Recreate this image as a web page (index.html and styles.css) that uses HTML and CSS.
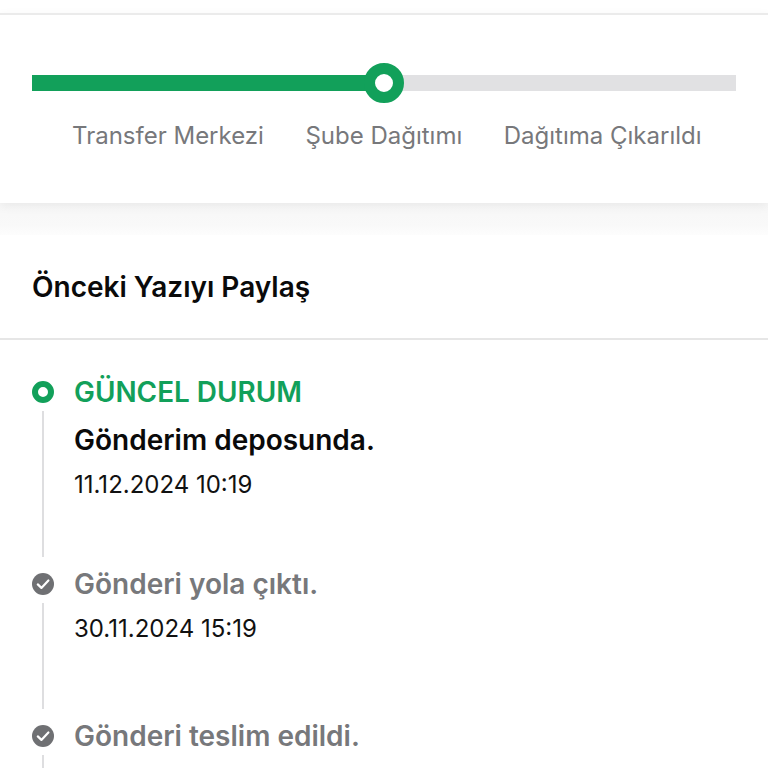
FILE: index.html
```html
<!DOCTYPE html>
<html lang="tr">
<head>
<meta charset="utf-8">
<title>Gönderi Takibi</title>
<link rel="stylesheet" href="styles.css">
</head>
<body>
<div class="page">
  <section class="progress-card">
    <div class="track">
      <div class="track-fill"></div>
      <div class="track-knob"></div>
    </div>
    <div class="steps">
      <span>Transfer Merkezi</span>
      <span>Şube Dağıtımı</span>
      <span>Dağıtıma Çıkarıldı</span>
    </div>
  </section>
  <div class="spacer"></div>
  <section class="history">
    <h2 class="history-title">Önceki Yazıyı Paylaş</h2>
    <ol class="timeline">
      <li class="event event-current">
        <div class="rail"><span class="dot-current"></span><span class="rail-line"></span></div>
        <div class="event-body">
          <div class="current-label">GÜNCEL DURUM</div>
          <div class="event-title">Gönderim deposunda.</div>
          <div class="event-time">11.12.2024 10:19</div>
        </div>
      </li>
      <li class="event event-past">
        <div class="rail">
          <svg class="dot-check" viewBox="0 0 22 22" aria-hidden="true"><circle cx="11" cy="11" r="11" fill="#6f7073"/><path d="M5.8 11.4l3.6 3.5 7-7.4" fill="none" stroke="#fff" stroke-width="2.2" stroke-linecap="round" stroke-linejoin="round"/></svg>
          <span class="rail-line"></span>
        </div>
        <div class="event-body">
          <div class="event-title muted">Gönderi yola çıktı.</div>
          <div class="event-time">30.11.2024 15:19</div>
        </div>
      </li>
      <li class="event event-past">
        <div class="rail">
          <svg class="dot-check" viewBox="0 0 22 22" aria-hidden="true"><circle cx="11" cy="11" r="11" fill="#6f7073"/><path d="M5.8 11.4l3.6 3.5 7-7.4" fill="none" stroke="#fff" stroke-width="2.2" stroke-linecap="round" stroke-linejoin="round"/></svg>
          <span class="rail-line"></span>
        </div>
        <div class="event-body">
          <div class="event-title muted">Gönderi teslim edildi.</div>
        </div>
      </li>
    </ol>
  </section>
</div>
</body>
</html>
```
FILE: styles.css
```css
* { box-sizing: border-box; }
html, body { margin: 0; padding: 0; height: 100%; overflow: hidden; background: #fff; }
body { font-family: Inter, "Noto Sans", sans-serif; color: #0a0a0a; }
.page { height: 768px; overflow: hidden; padding-top: 13px; }

.progress-card {
  height: 190px;
  padding: 60px 32px 0;
  background: #fff;
  border-top: 2px solid #ebebeb;
  box-shadow: 0 3px 10px rgba(0, 0, 0, 0.06);
  position: relative;
}
.track { position: relative; height: 16px; background: #e1e1e3; }
.track-fill { width: 50%; height: 100%; background: #12a05a; }
.track-knob {
  position: absolute;
  left: 50%;
  top: 50%;
  width: 40px;
  height: 40px;
  margin: -20px 0 0 -20px;
  background: #fff;
  border: 11px solid #12a05a;
  border-radius: 50%;
}
.steps {
  display: flex;
  gap: 41.5px;
  margin-top: 29px;
  padding-left: 40px;
  font-size: 24px;
  line-height: 32px;
  color: #77787b;
  white-space: nowrap;
}

.spacer { height: 32px; background: linear-gradient(#f7f7f7, #f9f9f9 70%, #fdfdfd); }

.history { background: #fff; }
.history-title {
  margin: 0;
  height: 105px;
  padding: 0 32px;
  display: flex;
  align-items: center;
  font-size: 28px;
  font-weight: 600;
  color: #0a0a0a;
  border-bottom: 2px solid #e6e6e6;
}
.timeline { list-style: none; margin: 0; padding: 35px 32px 0; }
.event { display: flex; gap: 20px; }
.event-current { height: 192px; }
.event-past { height: 152px; }
.rail { width: 22px; flex: none; display: flex; flex-direction: column; align-items: center; padding-top: 6px; }
.dot-current { width: 22px; height: 22px; flex: none; border: 6px solid #12a05a; border-radius: 50%; background: #fff; }
.dot-check { width: 22px; height: 22px; flex: none; }
.rail-line { width: 2px; flex: 1; margin-top: 8px; background: #dedee0; }
.event-current .rail-line { margin-bottom: 10px; }
.event-past .rail-line { margin-bottom: 10px; }
.event-body { flex: 1; min-width: 0; }
.current-label { font-size: 27.9px; line-height: 34px; font-weight: 600; color: #12a05a; }
.event-title { font-size: 28px; line-height: 34px; font-weight: 600; margin-top: 14px; color: #0a0a0a; }
.event-past .event-title { margin-top: 0; }
.event-title.muted { color: #77787b; }
.event-time { font-size: 24px; line-height: 32px; margin-top: 12px; color: #111; }
```
